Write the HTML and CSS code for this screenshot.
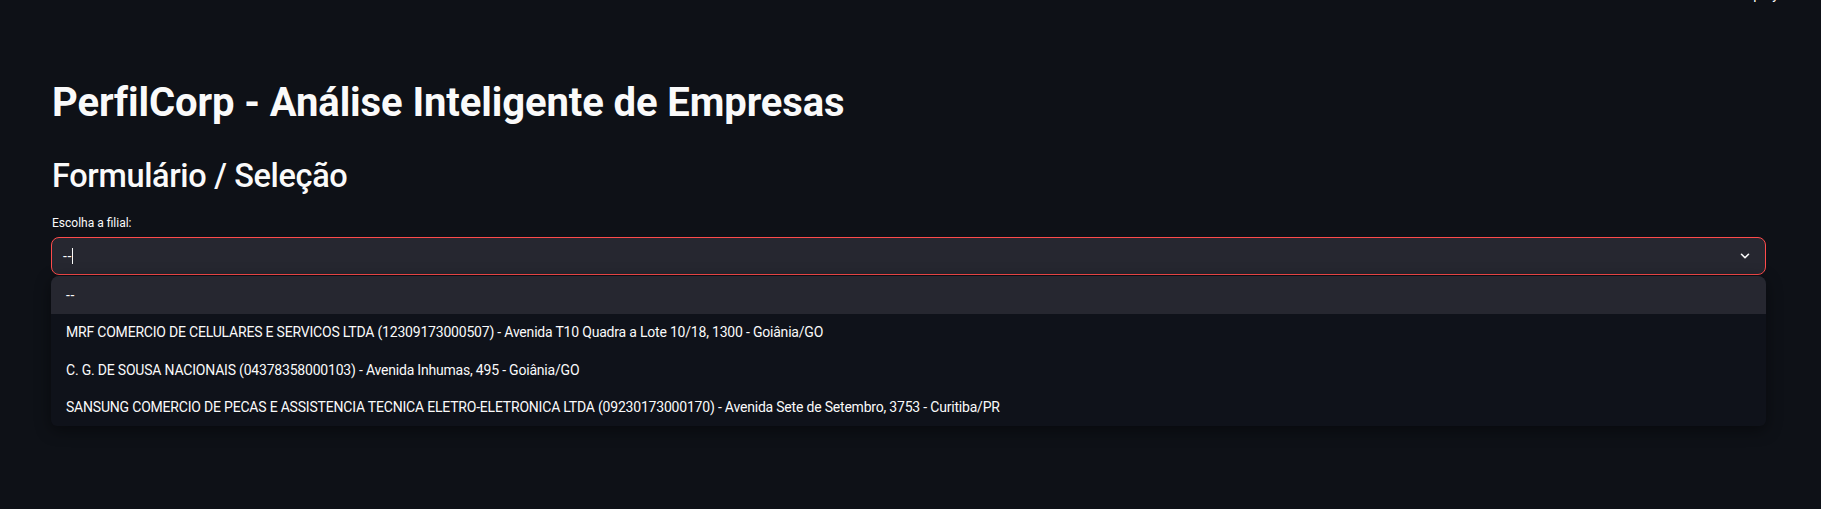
FILE: index.html
```html
<!DOCTYPE html>
<html lang="pt">
<head>
<meta charset="utf-8">
<title>PerfilCorp</title>
<link rel="stylesheet" href="styles.css">
</head>
<body>
<header class="toolbar"><span class="deploy">Deploy</span><span class="dots">⋮</span></header>
<main class="main">
  <h1 class="title">PerfilCorp - Análise Inteligente de Empresas</h1>
  <h2 class="subtitle">Formulário / Seleção</h2>
  <div class="field">
    <label class="label">Escolha a filial:</label>
    <div class="select-wrap">
      <div class="select">
        <span class="value">--</span><span class="caret"></span>
        <svg class="chev" width="12" height="12" viewBox="0 0 24 24"><path d="M5 8.5l7 7 7-7" fill="none" stroke="#fafafa" stroke-width="3.2" stroke-linecap="round" stroke-linejoin="round"/></svg>
      </div>
      <ul class="menu">
        <li class="opt active"><span class="dash">--</span></li>
        <li class="opt">MRF COMERCIO DE CELULARES E SERVICOS LTDA (12309173000507) - Avenida T10 Quadra a Lote 10/18, 1300 - Goiânia/GO</li>
        <li class="opt">C. G. DE SOUSA NACIONAIS (04378358000103) - Avenida Inhumas, 495 - Goiânia/GO</li>
        <li class="opt">SANSUNG COMERCIO DE PECAS E ASSISTENCIA TECNICA ELETRO-ELETRONICA LTDA (09230173000170) - Avenida Sete de Setembro, 3753 - Curitiba/PR</li>
      </ul>
    </div>
  </div>
</main>
</body>
</html>
```

FILE: styles.css
```css
html, body {
  margin: 0;
  padding: 0;
  background: #0e1117;
  color: #fafafa;
  font-family: Roboto, "Noto Sans", "Liberation Sans", sans-serif;
  height: 100%;
  overflow: hidden;
}

.toolbar {
  position: absolute;
  top: -14px;
  right: 8px;
  display: flex;
  gap: 20px;
  font-size: 14px;
  color: #fafafa;
}

.main {
  display: flex;
  flex-direction: column;
  padding: 78px 55px 0 51px;
}

.title {
  margin: 0 0 0 1px;
  font-size: 40px;
  line-height: 50px;
  font-weight: 700;
  letter-spacing: -0.1px;
}

.subtitle {
  margin: 28px 0 0 1px;
  font-size: 32.5px;
  line-height: 40px;
  font-weight: 500;
  letter-spacing: -0.35px;
}

.field {
  display: flex;
  flex-direction: column;
  margin-top: 19px;
}

.label {
  font-size: 12px;
  line-height: 16px;
  margin-left: 1px;
  margin-bottom: 6px;
}

.select-wrap {
  position: relative;
}

.select {
  display: flex;
  align-items: center;
  height: 38px;
  box-sizing: border-box;
  background: #262730;
  border: 1px solid #ff4b4b;
  border-radius: 8px;
  padding: 0 14px 0 11px;
  font-size: 14px;
}

.value {
  letter-spacing: 0.6px;
}

.caret {
  width: 1.5px;
  height: 16px;
  background: #fafafa;
  margin-left: 0;
}

.chev {
  margin-left: auto;
}

.menu {
  position: absolute;
  left: 0;
  right: 0;
  top: 39px;
  margin: 0;
  padding: 0;
  list-style: none;
  background: #0f121a;
  border-radius: 8px 8px 6px 6px;
  box-shadow: 0 4px 16px rgba(0, 0, 0, 0.45);
  overflow: hidden;
}

.opt {
  height: 37.5px;
  display: flex;
  align-items: center;
  padding-left: 15px;
  font-size: 14px;
  letter-spacing: -0.2px;
  white-space: nowrap;
}

.opt.active {
  background: #262730;
}

.dash {
  letter-spacing: 0.6px;
}
```
